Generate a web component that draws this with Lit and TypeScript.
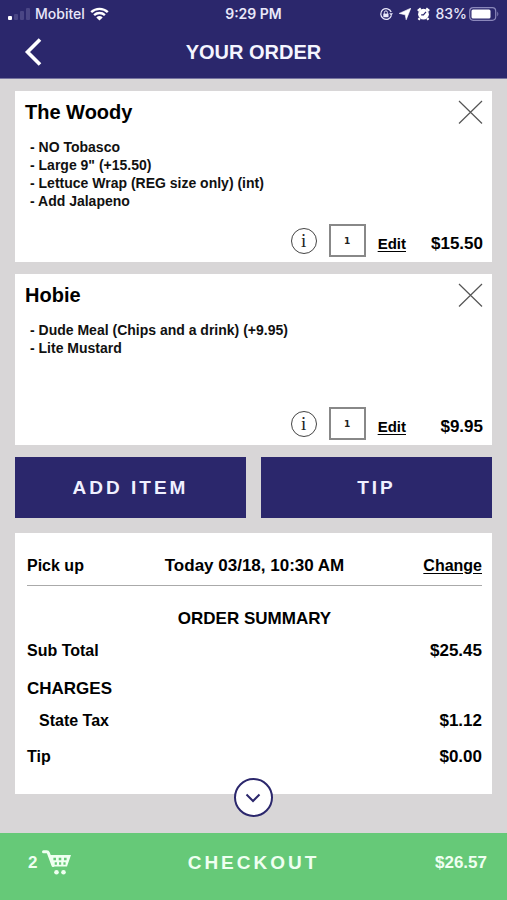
import { LitElement, html, css, svg } from "lit";
import { customElement, property } from "lit/decorators.js";

interface OrderLine {
  name: string;
  options: string[];
  quantity: number;
  price: string;
}

const ORDER: OrderLine[] = [
  {
    name: "The Woody",
    options: ["NO Tobasco", 'Large 9" (+15.50)', "Lettuce Wrap (REG size only) (int)", "Add Jalapeno"],
    quantity: 1,
    price: "$15.50",
  },
  {
    name: "Hobie",
    options: ["Dude Meal (Chips and a drink) (+9.95)", "Lite Mustard"],
    quantity: 1,
    price: "$9.95",
  },
];

const reset = css`
  * {
    box-sizing: border-box;
  }
  button {
    margin: 0;
    padding: 0;
    border: 0;
    background: none;
    color: inherit;
    font: inherit;
    cursor: pointer;
  }
  svg {
    display: block;
  }
  h1,
  h2,
  h3,
  ul,
  dl,
  dd {
    margin: 0;
    padding: 0;
  }
  a {
    color: inherit;
    text-underline-offset: 2px;
  }
`;

@customElement("status-bar")
export class StatusBar extends LitElement {
  static styles = [
    reset,
    css`
      :host {
        display: grid;
        grid-template-columns: 1fr auto 1fr;
        align-items: center;
        height: 27px;
        padding: 0 8px;
        color: #e9e8fa;
        font: 500 14px/20px Inter, "Liberation Sans", sans-serif;
      }
      .side {
        display: flex;
        align-items: center;
        gap: 5px;
      }
      .right {
        justify-content: flex-end;
        gap: 6px;
      }
      .charge {
        display: flex;
        align-items: center;
        gap: 2px;
      }
      .time {
        font-weight: 600;
      }
    `,
  ];

  render() {
    return html`
      <div class="side">
        <svg width="22" height="14" viewBox="0 0 22 14" aria-hidden="true">
          <rect x="0" y="9" width="4" height="4" rx="1" fill="#fff" />
          <rect x="6" y="7" width="4" height="6" rx="1" fill="#4a4685" />
          <rect x="12" y="4" width="4" height="9" rx="1" fill="#4a4685" />
          <rect x="18" y="1" width="4" height="12" rx="1" fill="#4a4685" />
        </svg>
        <span>Mobitel</span>
        <svg width="19" height="14" viewBox="0 0 19 14" aria-hidden="true">
          <path d="M1.2 5.2a12 12 0 0 1 16.6 0M4.1 8.2a7.9 7.9 0 0 1 10.8 0" fill="none" stroke="#fff" stroke-width="2.4" />
          <path d="M6.3 10.4a4.7 4.7 0 0 1 6.4 0L9.5 13.6z" fill="#fff" />
        </svg>
      </div>
      <span class="time">9:29 PM</span>
      <div class="side right">
        <svg width="14" height="14" viewBox="0 0 14 14" aria-hidden="true">
          <path d="M12.2 5a5.4 5.4 0 1 0 .2 3.4" fill="none" stroke="#e9e8fa" stroke-width="1.3" />
          <path d="M10.2 6.2h3.8l-1.800 2.600z" fill="#e9e8fa" />
          <path d="M4.300 6.600h5.200v3.600H4.300z" fill="#e9e8fa" />
          <path d="M5.400 6.800V5.400a1.500 1.500 0 0 1 3 0v1.400" fill="none" stroke="#e9e8fa" />
        </svg>
        <svg width="12" height="12" viewBox="0 0 12 12" aria-hidden="true">
          <path d="M11.800.2 7.200 11.800 6.200 6.800.2 5.400z" fill="#fff" stroke="#fff" stroke-width=".6" />
        </svg>
        <svg width="13" height="14" viewBox="0 0 13 14" aria-hidden="true">
          <circle cx="6.500" cy="7.200" r="5.400" fill="#fff" />
          <path d="M.8 3.800 3.800 1.300M12.200 3.800 9.200 1.300M2.800 11.200l-1.300 1.600M10.200 11.200l1.300 1.600" stroke="#fff" stroke-width="2.200" />
          <path d="M9 4.800 6.400 7.800H4.200" fill="none" stroke="#2b276c" stroke-width="1.200" />
        </svg>
        <div class="charge">
          <span>83%</span>
          <svg width="30" height="14" viewBox="0 0 30 14" aria-hidden="true">
            <rect x=".7" y=".7" width="26" height="12.600" rx="3.500" fill="none" stroke="#8b88bb" stroke-width="1.200" />
            <rect x="2.500" y="2.500" width="19" height="9" rx="1.500" fill="#fff" />
            <path d="M28.300 4.500q2 2.500 0 5z" fill="#8b88bb" />
          </svg>
        </div>
      </div>
    `;
  }
}

@customElement("order-item")
export class OrderItem extends LitElement {
  @property({ attribute: false }) item!: OrderLine;

  static styles = [
    reset,
    css`
      :host {
        display: flex;
        flex-direction: column;
        min-height: 171px;
        padding: 9px 9px 5px 10px;
        background: #fff;
      }
      .head {
        display: flex;
        justify-content: space-between;
      }
      h2 {
        font-size: 20px;
        line-height: 24px;
      }
      ul {
        margin: 14px 0 14px 5px;
        list-style: none;
        font-size: 14px;
        line-height: 18px;
        color: #111;
      }
      .actions {
        display: flex;
        align-items: center;
        justify-content: flex-end;
        gap: 12px;
        margin-top: auto;
      }
      .info {
        width: 26px;
        height: 26px;
        border: 1px solid #444;
        border-radius: 50%;
        color: #222;
        font: 19px/24px "Liberation Serif", serif;
      }
      .qty {
        width: 37px;
        height: 33px;
        padding: 0;
        border: 2px solid #888;
        border-radius: 0;
        background: #fff;
        color: #222;
        text-align: center;
        font: bold 9px "DejaVu Sans", sans-serif;
      }
      .edit,
      .price {
        padding-top: 6px;
        line-height: 20px;
      }
      .edit {
        font-size: 15px;
      }
      .price {
        min-width: 65px;
        text-align: right;
        font-size: 17px;
      }
    `,
  ];

  render() {
    const { name, options, quantity, price } = this.item;
    return html`
      <div class="head">
        <h2>${name}</h2>
        <button aria-label="Remove ${name}">
          <svg width="25" height="24" viewBox="0 0 25 24">
            <path d="M1 1 24 23.500M24 1 1 23.500" stroke="#555" stroke-width="1.200" />
          </svg>
        </button>
      </div>
      <ul>
        ${options.map((option) => html`<li>- ${option}</li>`)}
      </ul>
      <div class="actions">
        <button class="info" aria-label="About ${name}">i</button>
        <input class="qty" inputmode="numeric" aria-label="Quantity of ${name}" .value=${String(quantity)} />
        <a class="edit" href="#edit">Edit</a>
        <span class="price">${price}</span>
      </div>
    `;
  }
}

@customElement("order-summary")
export class OrderSummary extends LitElement {
  static styles = [
    reset,
    css`
      :host {
        display: block;
        position: relative;
        padding: 21px 10px 25px 12px;
        background: #fff;
        font-size: 16px;
        line-height: 24px;
      }
      .pickup {
        display: grid;
        grid-template-columns: 1fr auto 1fr;
        padding-bottom: 7px;
        border-bottom: 1px solid #aaa;
      }
      .when,
      h2,
      h3,
      dd {
        font-size: 17px;
        line-height: 24px;
      }
      .change {
        justify-self: end;
      }
      h2 {
        margin-top: 21px;
        text-align: center;
      }
      .row {
        display: flex;
        justify-content: space-between;
        margin-top: 8px;
      }
      h3 {
        margin-top: 14px;
      }
      .indent {
        padding-left: 12px;
      }
      .tip {
        margin-top: 12px;
      }
      .expand {
        position: absolute;
        bottom: -23px;
        left: 50%;
        display: grid;
        place-items: center;
        width: 39px;
        height: 39px;
        margin-left: -20px;
        border: 2px solid #2b276c;
        border-radius: 50%;
        background: #fff;
      }
    `,
  ];

  render() {
    return html`
      <div class="pickup">
        <span>Pick up</span>
        <span class="when">Today 03/18, 10:30 AM</span>
        <a class="change" href="#change">Change</a>
      </div>
      <h2>ORDER SUMMARY</h2>
      <dl>
        <div class="row"><dt>Sub Total</dt><dd>$25.45</dd></div>
      </dl>
      <h3>CHARGES</h3>
      <dl>
        <div class="row indent"><dt>State Tax</dt><dd>$1.12</dd></div>
        <div class="row tip"><dt>Tip</dt><dd>$0.00</dd></div>
      </dl>
      <button class="expand" aria-label="Show more">
        <svg width="16" height="10" viewBox="0 0 16 10">
          <path d="M1.500 1.500 8 8l6.500-6.500" fill="none" stroke="#2b276c" stroke-width="2" />
        </svg>
      </button>
    `;
  }
}

const cart = svg`
  <path d="M1.500 1.800h3.200c1 0 1.400.4 1.700 1.200L11 15.500" fill="none" stroke="#effff1" stroke-width="3" stroke-linecap="round" />
  <path d="M7 5h22l-4 11.500H10.800z" fill="#effff1" />
  <path d="M11.400 9h2.600M16.700 9h2.600M22 9h2.600M12.700 13.500h2.200M17 13.500h2.200M21.400 13.500h2.200" stroke="#66c978" stroke-width="2.400" />
  <circle cx="14.500" cy="22.200" r="2.300" fill="#effff1" />
  <circle cx="21.500" cy="22.200" r="2.300" fill="#effff1" />`;

@customElement("app-root")
export class AppRoot extends LitElement {
  static styles = [
    reset,
    css`
      :host {
        display: flex;
        flex-direction: column;
        min-height: 100vh;
        background: #d8d6d7;
        color: #000;
        font-family: "Liberation Sans", Arial, sans-serif;
        font-weight: bold;
      }
      header {
        background: #2b276c;
        border-bottom: 1px solid #77749f;
      }
      .nav {
        display: grid;
        grid-template-columns: 1fr auto 1fr;
        align-items: center;
        height: 51px;
        padding: 0 24px 2px;
        color: #f5f5ff;
      }
      .back {
        justify-self: start;
      }
      h1 {
        font-size: 20px;
        line-height: 24px;
      }
      main {
        display: flex;
        flex: 1;
        flex-direction: column;
        gap: 12px;
        padding: 12px 15px 39px;
      }
      .buttons {
        display: grid;
        grid-template-columns: 1fr 1fr;
        gap: 15px;
        margin-bottom: 3px;
      }
      .wide {
        height: 61px;
        background: #2b276c;
        color: #f0f0ff;
      }
      .wide,
      .label {
        font-size: 19px;
        letter-spacing: 3px;
      }
      .checkout {
        display: grid;
        grid-template-columns: 1fr auto 1fr;
        align-items: center;
        height: 67px;
        padding: 0 20px 8px;
        background: #66c978;
        color: #effff1;
        font-size: 17px;
      }
      .count {
        display: flex;
        align-items: center;
        gap: 5px;
        padding-left: 8px;
      }
      .total {
        text-align: right;
      }
    `,
  ];

  render() {
    return html`
      <header>
        <status-bar></status-bar>
        <div class="nav">
          <button class="back" aria-label="Back">
            <svg width="18" height="28" viewBox="0 0 18 28">
              <path d="M16 1.500 3.500 14 16 26.500" fill="none" stroke="#fff" stroke-width="3.600" />
            </svg>
          </button>
          <h1>YOUR ORDER</h1>
        </div>
      </header>
      <main>
        ${ORDER.map((item) => html`<order-item .item=${item}></order-item>`)}
        <div class="buttons">
          <button class="wide">ADD ITEM</button>
          <button class="wide">TIP</button>
        </div>
        <order-summary></order-summary>
      </main>
      <button class="checkout">
        <span class="count">
          2
          <svg width="30" height="25" viewBox="0 0 30 25" aria-hidden="true">${cart}</svg>
        </span>
        <span class="label">CHECKOUT</span>
        <span class="total">$26.57</span>
      </button>
    `;
  }
}
